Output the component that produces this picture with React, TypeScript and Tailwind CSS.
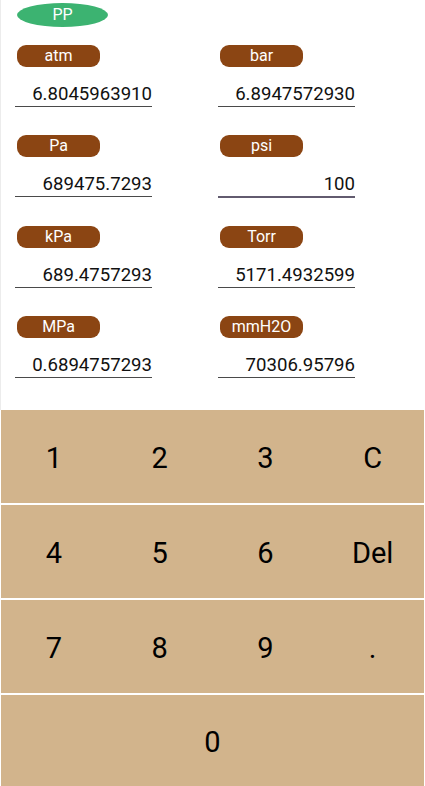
import React from "react";

const cells: { label: string; value: string; focused?: boolean }[][] = [
  [
    { label: "atm", value: "6.8045963910" },
    { label: "bar", value: "6.8947572930" },
  ],
  [
    { label: "Pa", value: "689475.7293" },
    { label: "psi", value: "100", focused: true },
  ],
  [
    { label: "kPa", value: "689.4757293" },
    { label: "Torr", value: "5171.4932599" },
  ],
  [
    { label: "MPa", value: "0.6894757293" },
    { label: "mmH2O", value: "70306.95796" },
  ],
];

function Cell({ label, value, focused }: { label: string; value: string; focused?: boolean }) {
  return (
    <div className="flex w-[137px] flex-col">
      <div className="ml-[2px] flex h-[22px] w-[83px] items-center justify-center rounded-[9px] bg-[#8B4513] text-[16px] leading-none text-white">
        {label}
      </div>
      <div className="mt-[15px] h-[24px] text-right text-[18.6px] leading-[24px] text-[#111]">
        {value}
      </div>
      {focused ? (
        <div className="h-[2px] w-full bg-[#625b6f]" />
      ) : (
        <div className="h-[1px] w-full bg-[#4a4a4a]" />
      )}
    </div>
  );
}

function Key({ children, className = "" }: { children: React.ReactNode; className?: string }) {
  return (
    <div className={"flex items-center justify-center pt-[4px] text-[29px] text-black " + className}>
      {children}
    </div>
  );
}

export default function App() {
  return (
    <div
      className="flex h-[786px] w-[425px] flex-col overflow-hidden bg-white"
      style={{ fontFamily: "Roboto, 'Noto Sans', sans-serif" }}
    >
      <div className="h-[410px] border-l border-[#ececec]">
        <div className="ml-[16px] mt-[3px] flex h-[24px] w-[91px] items-center justify-center rounded-[50%] bg-[#3CB371] text-[16px] leading-none text-white">
          PP
        </div>
        <div className="ml-[14px] mt-[18px] flex flex-col gap-[28px]">
          {cells.map((row, i) => (
            <div key={i} className="flex gap-[66px]">
              {row.map((c) => (
                <Cell key={c.label} {...c} />
              ))}
            </div>
          ))}
        </div>
      </div>
      <div className="mx-[1px] flex flex-1 flex-col gap-[2px]">
        <div className="grid h-[93px] grid-cols-4 bg-[#D2B48C]">
          <Key>1</Key>
          <Key>2</Key>
          <Key>3</Key>
          <Key className="pl-[3px]">C</Key>
        </div>
        <div className="grid h-[93px] grid-cols-4 bg-[#D2B48C]">
          <Key>4</Key>
          <Key>5</Key>
          <Key>6</Key>
          <Key className="pl-[3px]">Del</Key>
        </div>
        <div className="grid h-[93px] grid-cols-4 bg-[#D2B48C]">
          <Key>7</Key>
          <Key>8</Key>
          <Key>9</Key>
          <Key className="pl-[3px]">.</Key>
        </div>
        <div className="flex flex-1 bg-[#D2B48C]">
          <Key className="flex-1">0</Key>
        </div>
      </div>
    </div>
  );
}
